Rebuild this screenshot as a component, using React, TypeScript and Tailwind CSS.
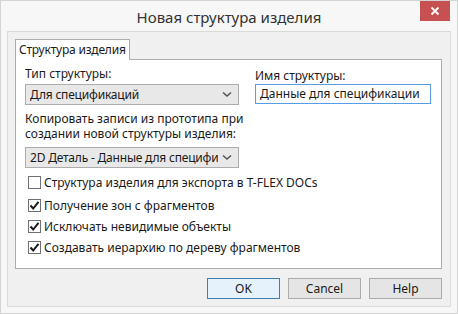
import React from "react";

const font = { fontFamily: '"Noto Sans", "Open Sans", sans-serif' };

function Check({ checked, label }: { checked: boolean; label: string }) {
  return (
    <div className="flex items-center h-[21px]">
      <div className="w-[13px] h-[13px] border border-[#707070] bg-white flex items-center justify-center">
        {checked && (
          <svg width="11" height="11" viewBox="0 0 11 11">
            <path d="M1.5 5.5 L4.2 8.5 L9.5 1.8" fill="none" stroke="#1a1a1a" strokeWidth="2" />
          </svg>
        )}
      </div>
      <span className="ml-[3px] text-[12px] text-[#1a1a1a] whitespace-nowrap">{label}</span>
    </div>
  );
}

function Select({ text }: { text: string }) {
  return (
    <div className="w-[214px] h-[21px] border border-[#acacac] bg-[#e8e8e8] flex items-center pl-[4px] pr-[6px]">
      <span className="flex-1 overflow-hidden whitespace-nowrap text-[12px] tracking-[-0.2px] text-[#1a1a1a]">{text}</span>
      <svg width="10" height="7" viewBox="0 0 10 7" className="ml-[4px]">
        <path d="M1 1.5 L5 5 L9 1.5" fill="none" stroke="#555" strokeWidth="1.6" />
      </svg>
    </div>
  );
}

function Btn({ label, focus }: { label: string; focus?: boolean }) {
  return (
    <div
      className={`w-[73px] h-[21px] flex items-center justify-center text-[12px] text-[#1a1a1a] border ${
        focus ? "border-[#3c7fb1] bg-[#e5f1fb]" : "border-[#acacac] bg-[#e5e5e5]"
      }`}
    >
      {label}
    </div>
  );
}

export default function App() {
  return (
    <div className="w-[458px] h-[314px] bg-[#f7f7f7] border border-[#d4d4d4] flex flex-col" style={font}>
      <div className="h-[30px] flex items-start relative">
        <div className="flex-1 text-center text-[15px] text-[#333] pt-[5px]">Новая структура изделия</div>
        <div className="absolute right-[7px] top-0 w-[30px] h-[20px] bg-[#c75050] flex items-center justify-center">
          <svg width="10" height="10" viewBox="0 0 10 10">
            <path d="M1.5 1.5 L8.5 8.5 M8.5 1.5 L1.5 8.5" stroke="#fff" strokeWidth="1.8" />
          </svg>
        </div>
      </div>
      <div className="mx-[6px] mb-[6px] flex-1 bg-[#f0f0f0] border border-[#dadada] pt-[6px] px-[7px] flex flex-col">
        <div className="flex">
          <div className="h-[21px] px-[3px] flex items-center bg-white border border-b-0 border-[#adadad] text-[12px] tracking-[-0.2px] text-[#1a1a1a] whitespace-nowrap relative top-[1px]">
            Структура изделия
          </div>
        </div>
        <div className="w-[427px] h-[210px] bg-white border border-[#adadad] pl-[9px] pt-[4px]">
          <div className="flex">
            <div className="w-[230px]">
              <div className="text-[12px] text-[#1a1a1a] h-[20px] leading-[20px]">Тип структуры:</div>
              <Select text="Для спецификаций" />
            </div>
            <div className="pt-[2px]">
              <div className="text-[12px] text-[#1a1a1a] h-[18px] leading-[18px] pt-[1px]">Имя структуры:</div>
              <div className="w-[176px] h-[20px] border border-[#569de5] bg-white flex items-center pl-[4px] text-[12px] text-[#1a1a1a]">
                Данные для спецификации
              </div>
            </div>
          </div>
          <div className="mt-[6px] text-[12px] leading-[15px] text-[#1a1a1a] w-[220px]">
            Копировать записи из прототипа при создании новой структуры изделия:
          </div>
          <div className="mt-[6px]">
            <Select text="2D Деталь - Данные для спецификации" />
          </div>
          <div className="mt-[4px] pl-[3px]">
            <Check checked={false} label="Структура изделия для экспорта в T-FLEX DOCs" />
            <div className="h-[2px]" />
            <Check checked label="Получение зон с фрагментов" />
            <Check checked label="Исключать невидимые объекты" />
            <Check checked label="Создавать иерархию по дереву фрагментов" />
          </div>
        </div>
        <div className="flex justify-end gap-[8px] mt-[9px] pr-[1px]">
          <Btn label="OK" focus />
          <Btn label="Cancel" />
          <Btn label="Help" />
        </div>
      </div>
    </div>
  );
}
